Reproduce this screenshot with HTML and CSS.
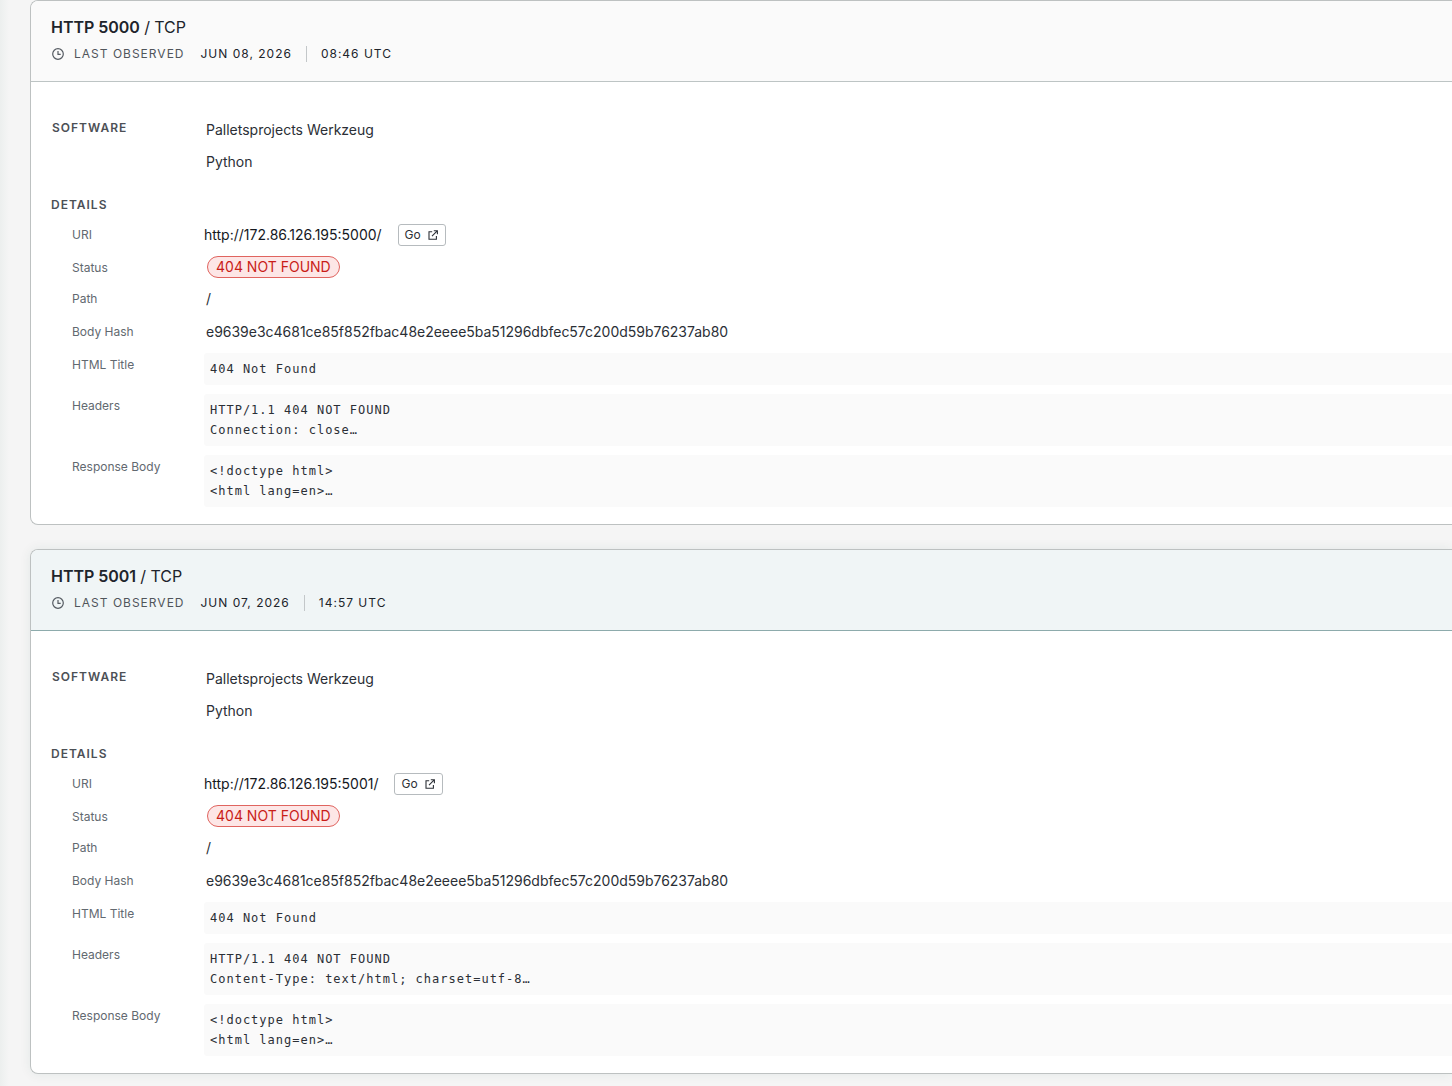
FILE: index.html
```html
<!DOCTYPE html>
<html lang="en">
<head>
    <meta charset="UTF-8">
    <meta name="viewport" content="width=device-width, initial-scale=1.0">
    <title>Services</title>
    <link rel="stylesheet" href="styles.css">
</head>
<body>

<main class="services">
    <section class="card">
        <header class="card-header">
            <h2 class="title"><strong>HTTP 5000</strong> / TCP</h2>
            <div class="observed">
                <svg class="clock" viewBox="0 0 12 12"><circle cx="6" cy="6" r="5.3"/><path d="M6 2.9V6.3H8.7"/></svg>
                <span class="observed-label">LAST OBSERVED</span>
                <span class="date">JUN 08, 2026</span>
                <span class="time">08:46 UTC</span>
            </div>
        </header>
        <div class="card-body">
            <div class="software">
                <h3 class="section-label">SOFTWARE</h3>
                <ul class="software-list">
                    <li>Palletsprojects Werkzeug</li>
                    <li>Python</li>
                </ul>
            </div>
            <h3 class="section-label">DETAILS</h3>
            <dl class="details">
                <div class="row">
                    <dt>URI</dt>
                    <dd class="uri"><span>http://172.86.126.195:5000/</span>
                        <button class="go-btn">Go <svg viewBox="0 0 10 10"><path d="M4.2 1.7H1V9.2H8.4V6M5.8.7H9.4V4.3M9.2.9L4 6.1"/></svg></button>
                    </dd>
                </div>
                <div class="row status-row"><dt>Status</dt><dd><span class="status">404 NOT FOUND</span></dd></div>
                <div class="row"><dt>Path</dt><dd>/</dd></div>
                <div class="row hash-row"><dt>Body Hash</dt><dd class="hash">e9639e3c4681ce85f852fbac48e2eeee5ba51296dbfec57c200d59b76237ab80</dd></div>
                <div class="row code-row"><dt>HTML Title</dt><dd><pre>404 Not Found</pre></dd></div>
                <div class="row code-row"><dt>Headers</dt><dd><pre>HTTP/1.1 404 NOT FOUND
Connection: close…</pre></dd></div>
                <div class="row code-row"><dt>Response Body</dt><dd><pre>&lt;!doctype html&gt;
&lt;html lang=en&gt;…</pre></dd></div>
            </dl>
        </div>
    </section>

    <section class="card active">
        <header class="card-header">
            <h2 class="title"><strong>HTTP 5001</strong> / TCP</h2>
            <div class="observed">
                <svg class="clock" viewBox="0 0 12 12"><circle cx="6" cy="6" r="5.3"/><path d="M6 2.9V6.3H8.7"/></svg>
                <span class="observed-label">LAST OBSERVED</span>
                <span class="date">JUN 07, 2026</span>
                <span class="time">14:57 UTC</span>
            </div>
        </header>
        <div class="card-body">
            <div class="software">
                <h3 class="section-label">SOFTWARE</h3>
                <ul class="software-list">
                    <li>Palletsprojects Werkzeug</li>
                    <li>Python</li>
                </ul>
            </div>
            <h3 class="section-label">DETAILS</h3>
            <dl class="details">
                <div class="row">
                    <dt>URI</dt>
                    <dd class="uri"><span>http://172.86.126.195:5001/</span>
                        <button class="go-btn">Go <svg viewBox="0 0 10 10"><path d="M4.2 1.7H1V9.2H8.4V6M5.8.7H9.4V4.3M9.2.9L4 6.1"/></svg></button>
                    </dd>
                </div>
                <div class="row status-row"><dt>Status</dt><dd><span class="status">404 NOT FOUND</span></dd></div>
                <div class="row"><dt>Path</dt><dd>/</dd></div>
                <div class="row hash-row"><dt>Body Hash</dt><dd class="hash">e9639e3c4681ce85f852fbac48e2eeee5ba51296dbfec57c200d59b76237ab80</dd></div>
                <div class="row code-row"><dt>HTML Title</dt><dd><pre>404 Not Found</pre></dd></div>
                <div class="row code-row"><dt>Headers</dt><dd><pre>HTTP/1.1 404 NOT FOUND
Content-Type: text/html; charset=utf-8…</pre></dd></div>
                <div class="row code-row"><dt>Response Body</dt><dd><pre>&lt;!doctype html&gt;
&lt;html lang=en&gt;…</pre></dd></div>
            </dl>
        </div>
    </section>
</main>

</body>
</html>
```
FILE: styles.css
```css
* {
    box-sizing: border-box;
}
body {
    margin: 0;
    font-family: Inter, sans-serif;
    font-size: 14px;
    color: #2b2f36;
    background: #f5f5f5;
}
h2, h3, ul, dl, dd, pre {
    margin: 0;
    padding: 0;
}
.services {
    display: flex;
    flex-direction: column;
    gap: 24px;
    height: 1086px;
    padding-left: 30px;
    overflow: hidden;
    background: linear-gradient(to right, #ecefee, #f5f5f5 9px);
}
.card {
    flex: none;
    height: 525px;
    border: 1px solid #bdc1c1;
    border-right: none;
    border-radius: 8px 0 0 8px;
    background: #fff;
    overflow: hidden;
}
.card-header {
    height: 81px;
    padding: 14px 20px 0;
    background: #fafafa;
    border-bottom: 1px solid #bdc4c4;
}
.active {
    box-shadow: 0 0 12px rgba(0, 80, 70, 0.08);
}
.active .card-header {
    background: #f0f5f6;
    border-bottom-color: #8dabac;
}
.title {
    font-size: 16px;
    font-weight: 400;
    line-height: 24px;
    letter-spacing: -0.05px;
    color: #20242b;
}
.title strong {
    font-weight: 600;
}
.observed {
    display: flex;
    align-items: center;
    height: 16px;
    margin-top: 7px;
    font-size: 12px;
    line-height: 16px;
    letter-spacing: 1px;
    color: #20242b;
}
.clock {
    width: 12px;
    height: 12px;
    margin: 0 10px 0 1px;
    fill: none;
    stroke: #555b62;
    stroke-width: 1.2;
}
.observed-label {
    margin-right: 16px;
    color: #50555b;
}
.time {
    margin-left: 14px;
    padding-left: 14px;
    border-left: 1px solid #c3c7c9;
}
.card-body {
    padding: 32px 0 0 20px;
}
.software {
    display: flex;
    height: 83px;
}
.section-label {
    font-size: 12px;
    font-weight: 600;
    line-height: 16px;
    letter-spacing: 1px;
    color: #4c5056;
}
.software .section-label {
    width: 155px;
    padding: 6px 0 0 1px;
}
.software-list {
    list-style: none;
    line-height: 32px;
}
.details {
    padding: 6px 0 0 21px;
}
.row {
    display: flex;
    align-items: center;
    height: 32px;
}
.row dt {
    width: 132px;
    flex: none;
    font-size: 12px;
    line-height: 16px;
    color: #626970;
}
.row dd {
    flex: 1;
    padding-left: 2px;
    line-height: 16px;
}
.row .uri {
    display: flex;
    align-items: center;
    padding-left: 0;
    color: #15181e;
}
.go-btn {
    display: flex;
    align-items: center;
    gap: 7px;
    height: 22px;
    margin-left: 16px;
    padding: 0 7px 0 6px;
    border: 1px solid #b6bbbe;
    border-radius: 3px;
    background: #fff;
    font-family: inherit;
    font-size: 12px;
    line-height: 16px;
    color: #2b2f36;
}
.go-btn svg {
    width: 10px;
    height: 10px;
    fill: none;
    stroke: #2b2f36;
    stroke-width: 1.1;
}
.status-row dt {
    padding-top: 1px;
}
.status {
    display: inline-block;
    height: 22px;
    margin-left: 1px;
    padding: 0 8px;
    border: 1px solid #e0645f;
    border-radius: 11px;
    background: #fde6e6;
    line-height: 20px;
    vertical-align: middle;
    color: #c91d18;
}
.hash-row {
    height: 34px;
    margin-bottom: 4px;
}
.hash {
    letter-spacing: -0.015px;
}
.row.code-row {
    align-items: flex-start;
    height: auto;
    margin-bottom: 9px;
}
.code-row dt {
    padding-top: 4px;
}
.code-row dd {
    padding-left: 0;
}
.code-row pre {
    padding: 6px;
    border-radius: 3px 0 0 3px;
    background: #fafafa;
    font-family: "DejaVu Sans Mono", monospace;
    font-size: 12px;
    line-height: 20px;
    letter-spacing: 1px;
}
```
